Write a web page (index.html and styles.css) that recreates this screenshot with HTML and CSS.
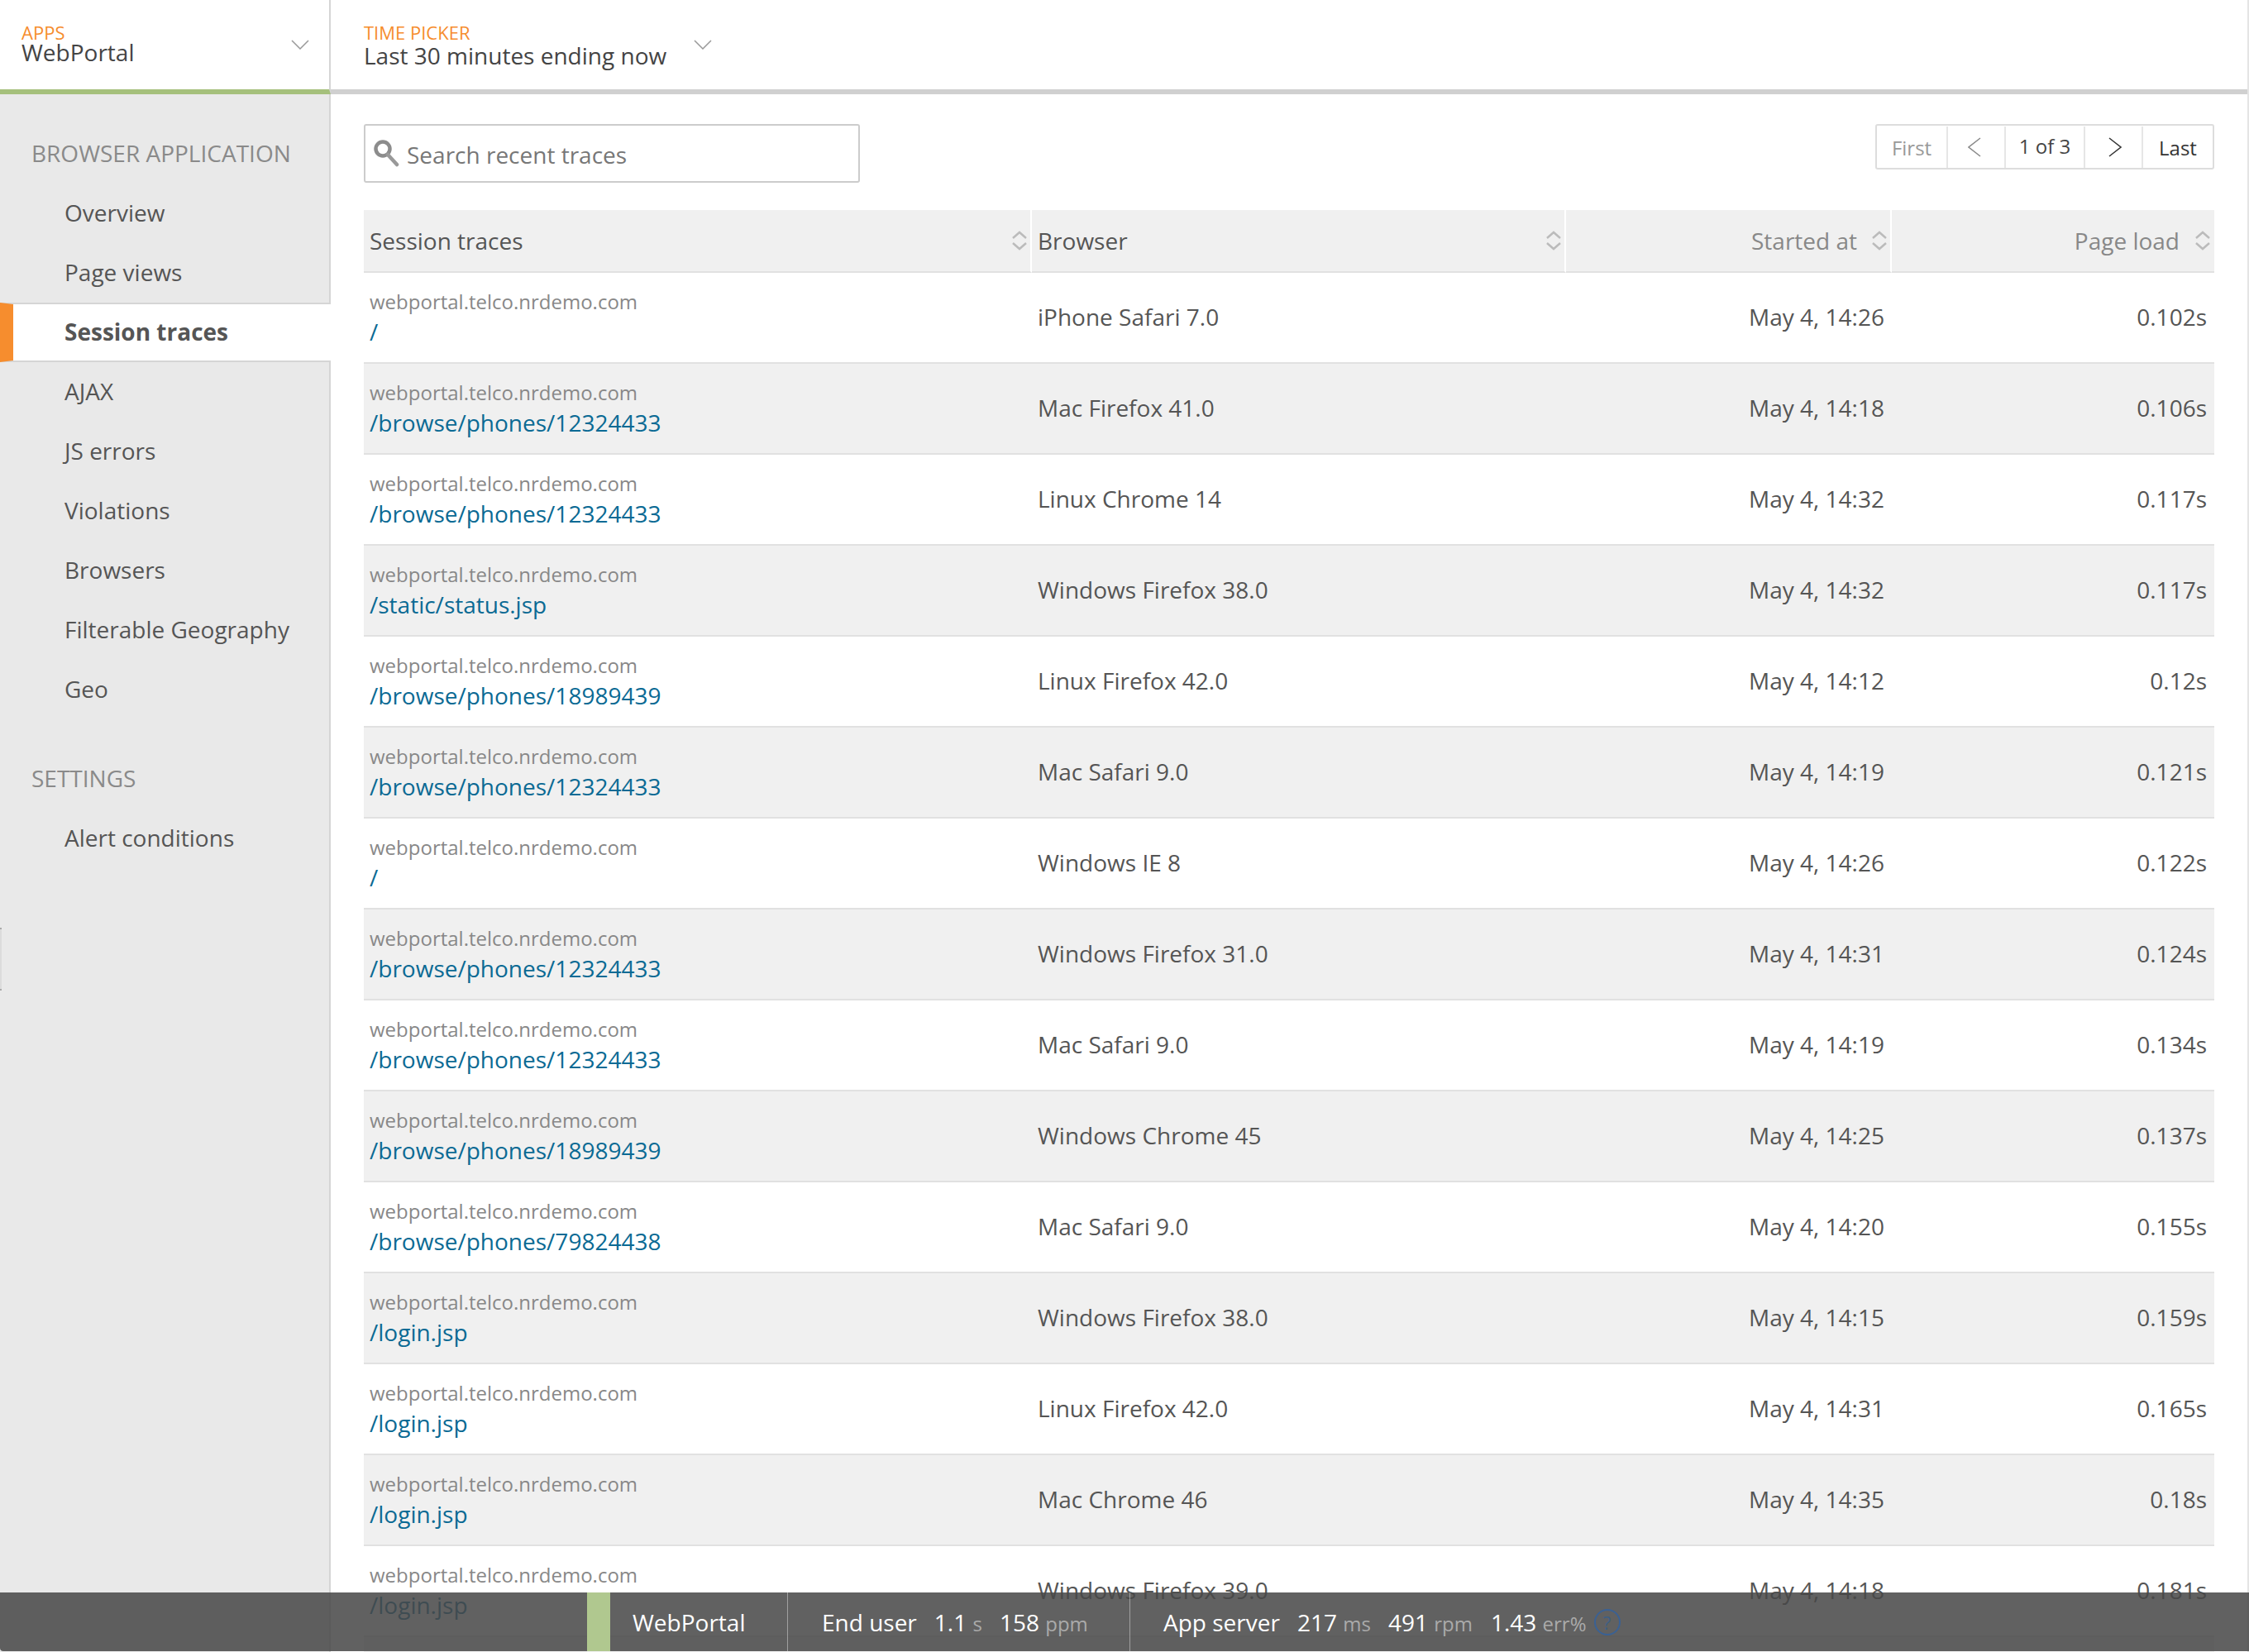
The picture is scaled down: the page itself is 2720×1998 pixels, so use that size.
FILE: index.html
```html
<!DOCTYPE html>
<html lang="en">
<head>
  <meta charset="UTF-8" />
  <title>WebPortal - Session traces</title>
  <link rel="stylesheet" href="styles.css">
</head>
<body>
  <div class="app">
    <header class="topbar">
      <div class="picker picker-apps">
        <div class="picker-text">
          <div class="picker-label">APPS</div>
          <div class="picker-value">WebPortal</div>
        </div>
        <svg class="chevron" width="22" height="12" viewBox="0 0 22 12"><path d="M1 1l10 10L21 1" /></svg>
      </div>
      <div class="picker picker-time">
        <div class="picker-text">
          <div class="picker-label">TIME PICKER</div>
          <div class="picker-value">Last 30 minutes ending now</div>
        </div>
        <svg class="chevron" width="22" height="12" viewBox="0 0 22 12"><path d="M1 1l10 10L21 1" /></svg>
      </div>
    </header>

    <div class="content">
      <nav class="sidebar">
        <h3>BROWSER APPLICATION</h3>
        <a class="nav-item">Overview</a>
        <a class="nav-item">Page views</a>
        <a class="nav-item active">Session traces</a>
        <a class="nav-item">AJAX</a>
        <a class="nav-item">JS errors</a>
        <a class="nav-item">Violations</a>
        <a class="nav-item">Browsers</a>
        <a class="nav-item">Filterable Geography</a>
        <a class="nav-item">Geo</a>
        <h3 class="settings">SETTINGS</h3>
        <a class="nav-item">Alert conditions</a>
        <div class="handle"></div>
      </nav>

      <main class="main">
        <div class="toolbar">
          <div class="search">
            <svg class="search-icon" width="32" height="34" viewBox="0 0 32 34"><circle cx="11" cy="11" r="8.5" class="lens" /><path d="M17 18l11 12" class="grip" /></svg>
            <span>Search recent traces</span>
          </div>
          <div class="pager">
            <span class="page-btn first">First</span>
            <span class="page-btn arrow arrow-prev"><svg width="16" height="24" viewBox="0 0 16 24"><path d="M15 1L1 12l14 11" class="prev" /></svg></span>
            <span class="page-btn count">1 of 3</span>
            <span class="page-btn arrow arrow-next"><svg width="16" height="24" viewBox="0 0 16 24"><path d="M1 1l14 11L1 23" class="next" /></svg></span>
            <span class="page-btn last">Last</span>
          </div>
        </div>

        <table class="traces">
          <colgroup>
            <col class="col-trace">
            <col class="col-browser">
            <col class="col-started">
            <col class="col-load">
          </colgroup>
          <thead>
            <tr>
              <th class="dark">Session traces<svg class="sort" width="20" height="24" viewBox="0 0 20 24"><path d="M2 9l8-7 8 7M2 15l8 7 8-7" /></svg></th>
              <th class="dark">Browser<svg class="sort" width="20" height="24" viewBox="0 0 20 24"><path d="M2 9l8-7 8 7M2 15l8 7 8-7" /></svg></th>
              <th class="num">Started at<svg class="sort" width="20" height="24" viewBox="0 0 20 24"><path d="M2 9l8-7 8 7M2 15l8 7 8-7" /></svg></th>
              <th class="num">Page load<svg class="sort" width="20" height="24" viewBox="0 0 20 24"><path d="M2 9l8-7 8 7M2 15l8 7 8-7" /></svg></th>
            </tr>
          </thead>
          <tbody>
            <tr><td><div class="host">webportal.telco.nrdemo.com</div><a class="path">/</a></td><td>iPhone Safari 7.0</td><td class="num">May 4, 14:26</td><td class="num">0.102s</td></tr>
            <tr><td><div class="host">webportal.telco.nrdemo.com</div><a class="path">/browse/phones/12324433</a></td><td>Mac Firefox 41.0</td><td class="num">May 4, 14:18</td><td class="num">0.106s</td></tr>
            <tr><td><div class="host">webportal.telco.nrdemo.com</div><a class="path">/browse/phones/12324433</a></td><td>Linux Chrome 14</td><td class="num">May 4, 14:32</td><td class="num">0.117s</td></tr>
            <tr><td><div class="host">webportal.telco.nrdemo.com</div><a class="path">/static/status.jsp</a></td><td>Windows Firefox 38.0</td><td class="num">May 4, 14:32</td><td class="num">0.117s</td></tr>
            <tr><td><div class="host">webportal.telco.nrdemo.com</div><a class="path">/browse/phones/18989439</a></td><td>Linux Firefox 42.0</td><td class="num">May 4, 14:12</td><td class="num">0.12s</td></tr>
            <tr><td><div class="host">webportal.telco.nrdemo.com</div><a class="path">/browse/phones/12324433</a></td><td>Mac Safari 9.0</td><td class="num">May 4, 14:19</td><td class="num">0.121s</td></tr>
            <tr><td><div class="host">webportal.telco.nrdemo.com</div><a class="path">/</a></td><td>Windows IE 8</td><td class="num">May 4, 14:26</td><td class="num">0.122s</td></tr>
            <tr><td><div class="host">webportal.telco.nrdemo.com</div><a class="path">/browse/phones/12324433</a></td><td>Windows Firefox 31.0</td><td class="num">May 4, 14:31</td><td class="num">0.124s</td></tr>
            <tr><td><div class="host">webportal.telco.nrdemo.com</div><a class="path">/browse/phones/12324433</a></td><td>Mac Safari 9.0</td><td class="num">May 4, 14:19</td><td class="num">0.134s</td></tr>
            <tr><td><div class="host">webportal.telco.nrdemo.com</div><a class="path">/browse/phones/18989439</a></td><td>Windows Chrome 45</td><td class="num">May 4, 14:25</td><td class="num">0.137s</td></tr>
            <tr><td><div class="host">webportal.telco.nrdemo.com</div><a class="path">/browse/phones/79824438</a></td><td>Mac Safari 9.0</td><td class="num">May 4, 14:20</td><td class="num">0.155s</td></tr>
            <tr><td><div class="host">webportal.telco.nrdemo.com</div><a class="path">/login.jsp</a></td><td>Windows Firefox 38.0</td><td class="num">May 4, 14:15</td><td class="num">0.159s</td></tr>
            <tr><td><div class="host">webportal.telco.nrdemo.com</div><a class="path">/login.jsp</a></td><td>Linux Firefox 42.0</td><td class="num">May 4, 14:31</td><td class="num">0.165s</td></tr>
            <tr><td><div class="host">webportal.telco.nrdemo.com</div><a class="path">/login.jsp</a></td><td>Mac Chrome 46</td><td class="num">May 4, 14:35</td><td class="num">0.18s</td></tr>
            <tr><td><div class="host">webportal.telco.nrdemo.com</div><a class="path">/login.jsp</a></td><td>Windows Firefox 39.0</td><td class="num">May 4, 14:18</td><td class="num">0.181s</td></tr>
            <tr><td></td><td></td><td></td><td></td></tr>
          </tbody>
        </table>
      </main>
    </div>
  </div>

  <footer class="statusbar">
    <div class="status-app">WebPortal</div>
    <div class="status-group status-user">
      <span class="metric-name">End user</span>
      <span class="metric"><b>1.1</b> <i>s</i></span>
      <span class="metric"><b>158</b> <i>ppm</i></span>
    </div>
    <div class="status-group status-server">
      <span class="metric-name">App server</span>
      <span class="metric"><b>217</b> <i>ms</i></span>
      <span class="metric"><b>491</b> <i>rpm</i></span>
      <span class="metric"><b>1.43</b> <i>err%</i></span>
      <span class="help">?</span>
    </div>
  </footer>
</body>
</html>
```

FILE: styles.css
```css
* {
  box-sizing: border-box;
}

html, body {
  height: 100%;
}

body {
  margin: 0;
  overflow: hidden;
  position: relative;
  font-family: "Open Sans", sans-serif;
  font-size: 28px;
  color: #555;
  background: white;
}

.app {
  height: 100%;
  display: flex;
  flex-direction: column;
  border-right: 2px solid #e4e4e4;
}

/* top bar */
.topbar {
  display: flex;
  height: 114px;
  flex-shrink: 0;
  border-bottom: 6px solid #d0d0d0;
}

.picker {
  display: flex;
  align-items: flex-start;
}

.picker-apps {
  width: 400px;
  margin-bottom: -6px;
  padding: 28px 24px 0 26px;
  justify-content: space-between;
  border-right: 2px solid #d5d5d5;
  border-bottom: 6px solid #a5c07c;
}

.picker-time {
  padding: 28px 0 0 40px;
  gap: 33px;
}

.picker-label {
  font-size: 22px;
  line-height: 22px;
  color: #f68d2e;
}

.picker-value {
  font-size: 28px;
  line-height: 35px;
  color: #444;
}

.picker-apps .picker-value {
  line-height: 26px;
}

.chevron {
  margin-top: 20px;
}

.chevron path {
  fill: none;
  stroke: #999;
  stroke-width: 1.5;
}

/* sidebar */
.content {
  flex: 1;
  display: flex;
  min-height: 0;
}

.sidebar {
  position: relative;
  width: 400px;
  flex-shrink: 0;
  padding-top: 52px;
  background: #e9e9e9;
  border-right: 2px solid #d5d5d5;
}

.sidebar h3 {
  margin: 0;
  padding-left: 38px;
  height: 40px;
  line-height: 38px;
  font-size: 28px;
  font-weight: 400;
  color: #8a8a8a;
}

.sidebar .settings {
  margin-top: 52px;
}

.nav-item {
  display: block;
  height: 72px;
  line-height: 71px;
  padding-left: 78px;
  color: #555;
}

.sidebar h3 + .nav-item {
  margin-top: 16px;
}

.nav-item.active {
  margin-right: -2px;
  line-height: 67px;
  padding-left: 62px;
  font-weight: 700;
  background: white;
  border-left: 16px solid #f68d2e;
  border-top: 2px solid #d5d5d5;
  border-bottom: 2px solid #d5d5d5;
  position: relative;
}

.handle {
  position: absolute;
  left: 0;
  top: 1008px;
  width: 2px;
  height: 76px;
  background: #dcdcdc;
  border-top: 2px solid #aaa;
  border-bottom: 2px solid #aaa;
}

/* main */
.main {
  flex: 1;
  min-width: 0;
  padding: 36px 40px 0;
}

.toolbar {
  display: flex;
  justify-content: space-between;
  align-items: flex-start;
  height: 71px;
  margin-bottom: 33px;
}

.search {
  display: flex;
  align-items: center;
  gap: 8px;
  width: 600px;
  height: 71px;
  padding-left: 10px;
  padding-top: 2px;
  border: 2px solid #ccc;
  border-radius: 3px;
  color: #777;
}

.search-icon {
  margin-top: -2px;
  filter: blur(0.6px);
}

.lens {
  fill: none;
  stroke: #8c8c8c;
  stroke-width: 4.5;
}

.grip {
  fill: none;
  stroke: #999;
  stroke-width: 4.5;
  stroke-linecap: round;
}

.pager {
  display: flex;
  height: 55px;
  padding-top: 1px;
  border: 2px solid #ddd;
  border-radius: 3px;
  font-size: 24px;
}

.page-btn {
  display: flex;
  align-items: center;
  justify-content: center;
  border-right: 2px solid #e6e6e6;
}

.page-btn:last-child {
  border-right: none;
}

.first {
  width: 86px;
  color: #999;
}

.arrow {
  width: 70px;
}

.arrow-prev {
  padding-right: 5px;
}

.arrow-next {
  padding-left: 3px;
}

.count {
  width: 96px;
  padding-bottom: 4px;
  color: #444;
}

.last {
  width: 84px;
  color: #333;
}

.prev {
  fill: none;
  stroke: #888;
  stroke-width: 1.5;
}

.next {
  fill: none;
  stroke: #333;
  stroke-width: 1.5;
}

/* table */
.traces {
  width: 2238px;
  table-layout: fixed;
  border-collapse: separate;
  border-spacing: 0;
}

.col-trace { width: 808px; }
.col-browser { width: 646px; }
.col-started { width: 394px; }
.col-load { width: 390px; }

.traces th {
  height: 76px;
  padding: 0 36px 0 7px;
  position: relative;
  text-align: left;
  font-weight: 400;
  color: #888;
  background: #f0f0f0;
  border-right: 2px solid white;
  border-bottom: 2px solid #e1e1e1;
}

.traces th:last-child {
  border-right: none;
}

.traces th.dark {
  color: #555;
}

.traces th.num {
  text-align: right;
  padding-right: 40px;
}

.traces th:last-child.num {
  padding-right: 42px;
}

.sort {
  position: absolute;
  right: 3px;
  top: 25px;
}

.sort path {
  fill: none;
  stroke: #bbb;
  stroke-width: 2.5;
}

.traces th:last-child .sort {
  right: 4px;
}

.traces td {
  height: 110px;
  padding: 0 7px 3px;
  border-bottom: 2px solid #e1e1e1;
}

.traces td.num {
  text-align: right;
  padding-right: 9px;
}

.traces tbody tr:nth-child(even) td {
  background: #f0f0f0;
}

.host {
  font-size: 24px;
  line-height: 36px;
  color: #888;
}

.path {
  display: block;
  line-height: 36px;
  color: #0b6a94;
}

/* bottom bar, lies over the table */
.statusbar {
  position: absolute;
  left: 0;
  right: 0;
  bottom: 1px;
  height: 71px;
  display: flex;
  align-items: center;
  padding-left: 710px;
  color: white;
  background: rgba(71, 71, 71, 0.86);
  border-bottom-left-radius: 4px;
}

.status-app {
  align-self: stretch;
  display: flex;
  align-items: center;
  width: 243px;
  padding-left: 27px;
  border-left: 28px solid #b0c88f;
  border-right: 1px solid rgba(255, 255, 255, 0.4);
}

.status-group {
  align-self: stretch;
  display: flex;
  align-items: center;
  padding-left: 41px;
  gap: 21px;
}

.status-user {
  width: 414px;
  border-right: 1px solid rgba(255, 255, 255, 0.4);
}

.status-server {
  padding-left: 40px;
}

.metric:nth-child(4) {
  margin-left: 1px;
}

.metric b {
  font-weight: 400;
}

.metric i {
  font-style: normal;
  font-size: 24px;
  color: #aaa;
}

.help {
  width: 32px;
  height: 32px;
  margin-left: -12px;
  line-height: 28px;
  text-align: center;
  font-size: 22px;
  color: #3d5f85;
  border: 2px solid #3a6194;
  border-radius: 50%;
}
```
